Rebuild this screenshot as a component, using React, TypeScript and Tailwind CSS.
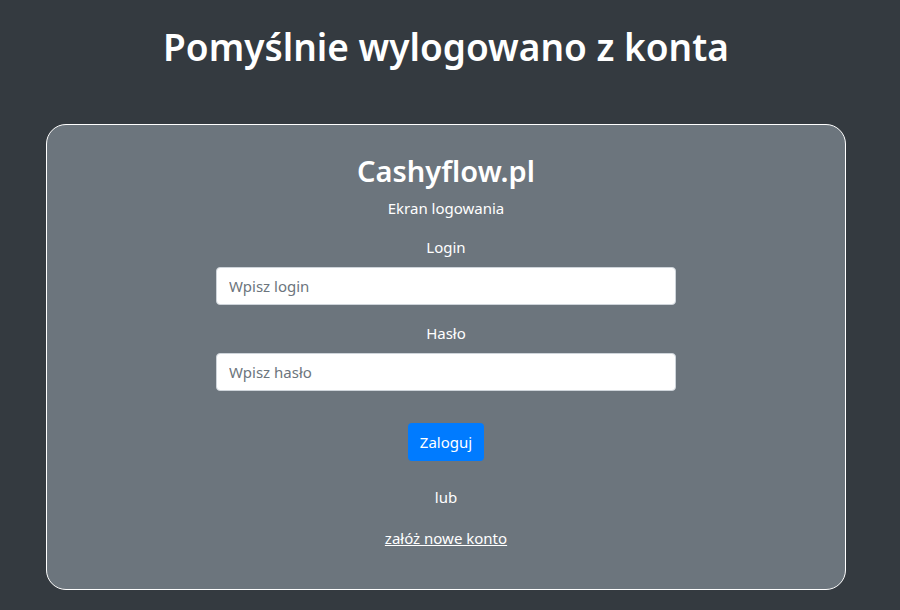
export default function App() {
  return (
    <div
      className="min-h-[610px] bg-[#343a40] pl-[46px] pr-[54px] pt-[23px] text-white"
      style={{ fontFamily: '"Noto Sans", "Open Sans", sans-serif' }}
    >
      <h1 className="text-center text-[37px] font-semibold leading-[48px]">Pomyślnie wylogowano z konta</h1>
      <div className="mt-[53px] flex h-[466px] flex-col items-center rounded-[20px] border border-white bg-[#6c757d] pt-[27px]">
        <h2 className="text-[29px] font-semibold leading-[38px]">Cashyflow.pl</h2>
        <p className="mt-[6px] text-[15px] leading-6">Ekran logowania</p>
        <label className="mt-[15px] text-[15px] leading-6">Login</label>
        <input
          className="mt-[8px] h-[38px] w-[460px] rounded border border-[#ced4da] bg-white px-3 text-[15px] text-[#495057] placeholder:text-[#6c757d]"
          placeholder="Wpisz login"
        />
        <label className="mt-[16px] text-[15px] leading-6">Hasło</label>
        <input
          type="password"
          className="mt-[8px] h-[38px] w-[460px] rounded border border-[#ced4da] bg-white px-3 text-[15px] text-[#495057] placeholder:text-[#6c757d]"
          placeholder="Wpisz hasło"
        />
        <button className="mt-[32px] h-[38px] rounded bg-[#007bff] px-3 text-[15px] text-white">Zaloguj</button>
        <p className="mt-[24px] text-[15px] leading-6">lub</p>
        <a href="#" className="mt-[17px] text-[15px] leading-6 text-white underline">
          załóż nowe konto
        </a>
      </div>
    </div>
  );
}
